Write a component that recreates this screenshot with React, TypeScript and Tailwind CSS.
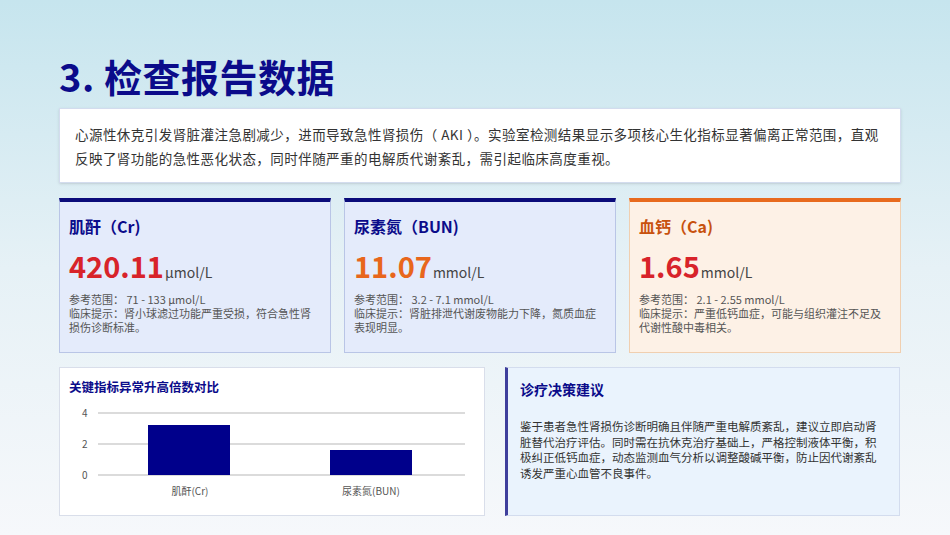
export default function App() {
  const f = { fontFamily: '"Noto Sans CJK SC", "Noto Sans", sans-serif' };
  return (
    <div style={f} className="w-[950px] h-[535px] overflow-hidden bg-gradient-to-b from-[#c6e5ee] via-[#e6f1f6] to-[#f6f8fb] pl-[59px] pr-[49px] pt-[50px]">
      <h1 className="text-[38px] leading-[52px] font-bold text-[#0b0b8a] h-[58px] tracking-[0.5px]">3. 检查报告数据</h1>
      <div className="bg-white border border-[#d3dcee] h-[75px] px-[15px] flex items-center text-[13.5px] leading-[24px] tracking-[0.45px] text-[#333] shadow-sm">
        心源性休克引发肾脏灌注急剧减少，进而导致急性肾损伤（ AKI ）。实验室检测结果显示多项核心生化指标显著偏离正常范围，直观反映了肾功能的急性恶化状态，同时伴随严重的电解质代谢紊乱，需引起临床高度重视。
      </div>
      <div className="flex gap-[13px] mt-[15px]">
        {[
          { t: "肌酐（Cr)", v: "420.11", u: "μmol/L", vc: "text-[#d8232a]", r: "71 - 133 μmol/L", h: "肾小球滤过功能严重受损，符合急性肾损伤诊断标准。", bg: "bg-[#e4ebfb]", bt: "border-t-[#0b0b7a]", tc: "text-[#0b0b8a]", b: "border-[#b9c5e6]" },
          { t: "尿素氮（BUN)", v: "11.07", u: "mmol/L", vc: "text-[#e8661c]", r: "3.2 - 7.1 mmol/L", h: "肾脏排泄代谢废物能力下降，氮质血症表现明显。", bg: "bg-[#e4ebfb]", bt: "border-t-[#0b0b7a]", tc: "text-[#0b0b8a]", b: "border-[#b9c5e6]" },
          { t: "血钙（Ca)", v: "1.65", u: "mmol/L", vc: "text-[#d8232a]", r: "2.1 - 2.55 mmol/L", h: "严重低钙血症，可能与组织灌注不足及代谢性酸中毒相关。", bg: "bg-[#fdf1e6]", bt: "border-t-[#e86a1e]", tc: "text-[#c8520e]", b: "border-[#f0cfb0]" },
        ].map((c) => (
          <div key={c.t} className={`w-[272px] h-[155px] border ${c.b} border-t-4 ${c.bt} ${c.bg} px-[9px] pt-[14px]`}>
            <div className={`text-[16px] font-bold leading-[20px] ${c.tc}`}>{c.t}</div>
            <div className="mt-[8px] flex items-baseline h-[36px]">
              <span className={`text-[29px] font-bold ${c.vc}`}>{c.v}</span>
              <span className="text-[14px] text-[#444] ml-[1px]">{c.u}</span>
            </div>
            <div className="mt-[12px] text-[11px] leading-[14px] text-[#555]">
              <div>参考范围： {c.r}</div>
              <div>临床提示：{c.h}</div>
            </div>
          </div>
        ))}
      </div>
      <div className="flex gap-[20px] mt-[14px]">
        <div className="w-[426px] h-[149px] bg-white border border-[#d9deea] px-[9px] pt-[10px]">
          <div className="text-[12.5px] font-bold text-[#0b0b8a]">关键指标异常升高倍数对比</div>
          <svg width="410" height="110">
            {[{ y: 16, l: "4" }, { y: 47, l: "2" }, { y: 78, l: "0" }].map((g) => (
              <g key={g.l}>
                <line x1="29" x2="396" y1={g.y} y2={g.y} stroke="#cfcfcf" strokeWidth="1.5" />
                <text x="13" y={g.y + 4} fontSize="10" fill="#555">{g.l}</text>
              </g>
            ))}
            <rect x="79" y="28" width="82" height="50" fill="#00008b" />
            <rect x="261" y="53" width="82" height="25" fill="#00008b" />
            <text x="121" y="98" fontSize="10" fill="#555" textAnchor="middle">肌酐(Cr)</text>
            <text x="302" y="98" fontSize="10" fill="#555" textAnchor="middle">尿素氮(BUN)</text>
          </svg>
        </div>
        <div className="w-[395px] h-[149px] bg-[#eaf3fd] border border-[#d3dcee] border-l-[3px] border-l-[#3f3f9c] px-[12px] pt-[10px]">
          <div className="text-[14px] font-bold text-[#0b0b8a] leading-[20px] mt-[1px]">诊疗决策建议</div>
          <div className="mt-[20px] text-[11.5px] leading-[15.5px] text-[#333]">
            鉴于患者急性肾损伤诊断明确且伴随严重电解质紊乱，建议立即启动肾脏替代治疗评估。同时需在抗休克治疗基础上，严格控制液体平衡，积极纠正低钙血症，动态监测血气分析以调整酸碱平衡，防止因代谢紊乱诱发严重心血管不良事件。
          </div>
        </div>
      </div>
    </div>
  );
}
